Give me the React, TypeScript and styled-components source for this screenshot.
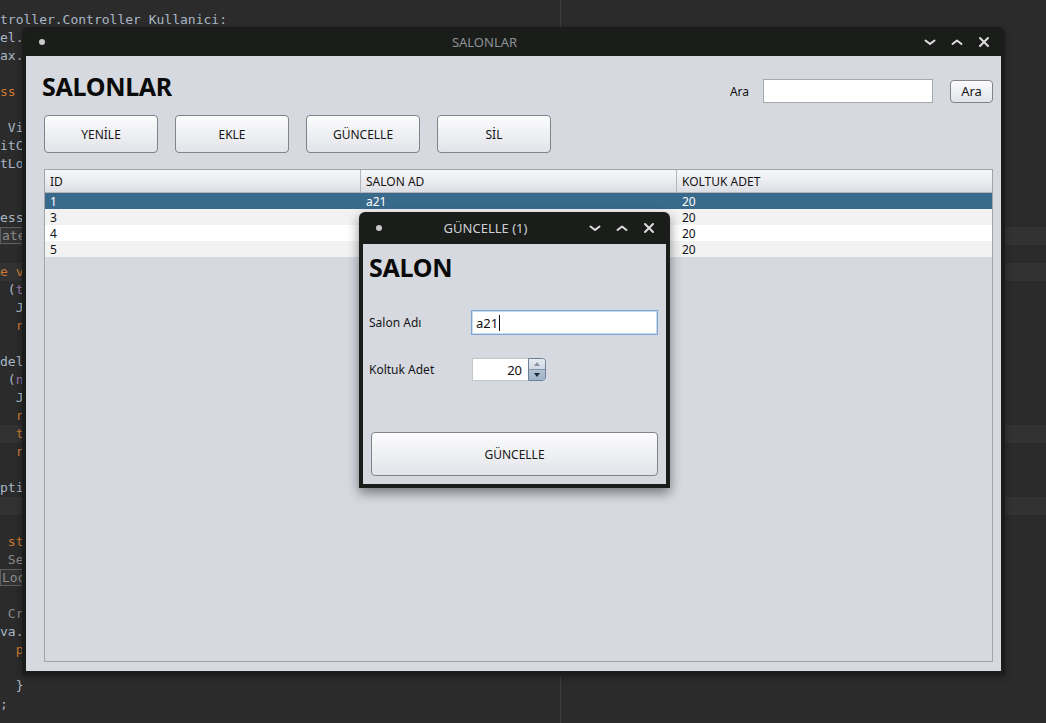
import React from "react";
import styled, { createGlobalStyle } from "styled-components";

const GlobalStyle = createGlobalStyle`
  html, body { margin: 0; padding: 0; background: #2b2b2b; }
  * { box-sizing: border-box; }
`;

const UI_FONT = `"Noto Sans", "Open Sans", "DejaVu Sans", sans-serif`;

const Desktop = styled.div`
  position: relative;
  width: 1046px;
  height: 723px;
  overflow: hidden;
  background: #2b2b2b;
  &::after {
    content: "";
    position: absolute;
    left: 560px;
    top: 0;
    bottom: 0;
    width: 1px;
    background: #3c3c3c;
  }
`;

const CodeArea = styled.div`
  display: flex;
  flex-direction: column;
  padding-top: 11px;
  font-family: "DejaVu Sans Mono", "Liberation Mono", monospace;
  font-size: 13px;
  line-height: 18px;
  color: #a9b7c6;
`;

const CodeLine = styled.div<{ $hl?: boolean }>`
  height: 18px;
  white-space: pre;
  background: ${(p) => (p.$hl ? "#323232" : "transparent")};
`;

const Kw = styled.span`
  color: #cc7832;
`;
const Var = styled.span`
  color: #9876aa;
`;
const Dim = styled.span`
  color: #8a8a8a;
`;
const Tag = styled.span`
  color: #8c8c8c;
  border: 1px solid #5e5e5e;
  background: #333333;
  padding: 0 1px;
`;

const Frame = styled.div<{ $x: number; $y: number; $w: number; $h: number; $shadow?: boolean }>`
  position: absolute;
  left: ${(p) => p.$x}px;
  top: ${(p) => p.$y}px;
  width: ${(p) => p.$w}px;
  height: ${(p) => p.$h}px;
  display: flex;
  flex-direction: column;
  background: #1b1d1b;
  border-radius: 6px 6px 0 0;
  box-shadow: ${(p) => (p.$shadow ? "0 5px 12px rgba(0,0,0,0.45)" : "0 2px 6px rgba(0,0,0,0.35)")};
  font-family: ${UI_FONT};
  z-index: 1;
`;

const TitleBar = styled.div<{ $h: number }>`
  height: ${(p) => p.$h}px;
  flex: none;
  display: flex;
  align-items: center;
  padding: 0 15px 0 17px;
`;

const TitleDot = styled.span`
  width: 6px;
  height: 6px;
  border-radius: 50%;
  background: #c9c9c9;
  flex: none;
`;

const TitleText = styled.div<{ $active?: boolean }>`
  flex: 1;
  text-align: center;
  font-size: 13px;
  color: ${(p) => (p.$active ? "#cdd1d4" : "#8d9194")};
`;

const Controls = styled.div`
  display: flex;
  align-items: center;
  gap: 15px;
`;

const Ctrl = styled.svg`
  width: 12px;
  height: 12px;
  display: block;
  stroke: #dedede;
  stroke-width: 2;
  fill: none;
  stroke-linecap: round;
  stroke-linejoin: round;
`;

const Body = styled.div`
  flex: 1;
  margin: 0 4px 4px 4px;
  background: #d6d9e0;
  display: flex;
  flex-direction: column;
  color: #111;
  font-size: 12px;
`;

const MainBody = styled(Body)`
  padding: 23px 8px 9px 18px;
`;

const HeaderRow = styled.div`
  height: 24px;
  display: flex;
  align-items: center;
`;

const Heading = styled.h1`
  margin: 0 0 10px -2px;
  font-size: 25px;
  line-height: 25px;
  font-weight: 700;
  color: #0a0a0a;
  letter-spacing: -0.3px;
`;

const DialogHeading = styled(Heading)`
  margin: 0;
`;

const SearchGroup = styled.div`
  margin-left: auto;
  display: flex;
  align-items: center;
`;

const SearchLabel = styled.span`
  font-size: 12px;
  margin-right: 14px;
`;

const TextBox = styled.div<{ $w: number }>`
  width: ${(p) => p.$w}px;
  height: 24px;
  background: #fff;
  border: 1px solid #a7a9ad;
`;

const Btn = styled.div<{ $w: number; $h: number }>`
  width: ${(p) => p.$w}px;
  height: ${(p) => p.$h}px;
  flex: none;
  display: flex;
  align-items: center;
  justify-content: center;
  border: 1px solid #808388;
  border-radius: 4px;
  background: linear-gradient(#fcfcfd 0%, #f0f1f4 45%, #e2e4e9 100%);
  box-shadow: inset 0 1px 0 #ffffff;
  font-size: 12px;
  color: #161616;
`;

const SmallBtn = styled(Btn)`
  margin-left: 17px;
  font-size: 13px;
`;

const ButtonRow = styled.div`
  margin-top: 12px;
  display: flex;
  gap: 17px;
`;

const Table = styled.div`
  margin-top: 16px;
  flex: 1;
  border: 1px solid #a1a4a9;
  display: flex;
  flex-direction: column;
`;

const TableHead = styled.div`
  height: 23px;
  display: grid;
  grid-template-columns: 316px 316px 1fr;
  border-bottom: 1px solid #b3b5ba;
  background: linear-gradient(#f6f7f9, #e9eaee 60%, #dcdee3);
`;

const HeadCell = styled.div`
  display: flex;
  align-items: center;
  padding-left: 5px;
  font-size: 12px;
  color: #141414;
  border-right: 1px solid #b4b6bb;
  &:last-child {
    border-right: none;
  }
`;

const Row = styled.div<{ $kind: "sel" | "odd" | "even" }>`
  height: 16px;
  display: grid;
  grid-template-columns: 316px 316px 1fr;
  background: ${(p) => (p.$kind === "sel" ? "#396a8b" : p.$kind === "odd" ? "#f2f2f2" : "#ffffff")};
  color: ${(p) => (p.$kind === "sel" ? "#ffffff" : "#111111")};
`;

const Cell = styled.div`
  padding-left: 5px;
  font-size: 12px;
  line-height: 17px;
  white-space: nowrap;
  overflow: hidden;
`;

const DialogBody = styled(Body)`
  padding: 11px 0 0 6px;
`;

const FormGrid = styled.div`
  margin-top: 30px;
  display: grid;
  grid-template-columns: 102px 187px;
  grid-template-rows: 25px 23px;
  row-gap: 23px;
  align-items: center;
`;

const FieldLabel = styled.span`
  font-size: 12px;
  color: #151515;
`;

const FocusField = styled.div`
  height: 25px;
  background: #fff;
  border: 1px solid #7ea5d2;
  box-shadow: inset 0 0 0 1px #c9dbef;
  display: flex;
  align-items: center;
  padding-left: 4px;
  font-size: 13px;
  color: #111;
`;

const Caret = styled.span`
  width: 1px;
  height: 16px;
  background: #111;
  margin-left: 1px;
`;

const Spinner = styled.div`
  width: 74px;
  height: 23px;
  margin-left: 1px;
  display: flex;
`;

const SpinField = styled.div`
  width: 56px;
  background: #fff;
  border: 1px solid #c4c6ca;
  border-right: none;
  display: flex;
  align-items: center;
  justify-content: flex-end;
  padding-right: 6px;
  font-size: 13px;
  color: #111;
`;

const SpinButtons = styled.div`
  width: 18px;
  display: flex;
  flex-direction: column;
  border: 1px solid #6f7f93;
  border-radius: 0 4px 4px 0;
  overflow: hidden;
`;

const SpinBtn = styled.div<{ $down?: boolean }>`
  flex: 1;
  display: flex;
  align-items: center;
  justify-content: center;
  background: ${(p) =>
    p.$down ? "linear-gradient(#b2c3d6, #9fb2c8)" : "linear-gradient(#e6ebf1, #cfd9e4)"};
  border-top: ${(p) => (p.$down ? "1px solid #8797aa" : "none")};
`;

const Tri = styled.span<{ $down?: boolean }>`
  width: 0;
  height: 0;
  border-left: 3px solid transparent;
  border-right: 3px solid transparent;
  ${(p) => (p.$down ? "border-top: 4px solid #1e2a38;" : "border-bottom: 4px solid #8a94a0;")}
`;

const WideButton = styled(Btn)`
  margin: 51px 0 0 2px;
  font-size: 12px;
`;

const ChevronDown = () => (
  <Ctrl viewBox="0 0 12 12">
    <path d="M1.5 4.5 L6 8 L10.5 4.5" />
  </Ctrl>
);
const ChevronUp = () => (
  <Ctrl viewBox="0 0 12 12">
    <path d="M1.5 8 L6 4.5 L10.5 8" />
  </Ctrl>
);
const CloseX = () => (
  <Ctrl viewBox="0 0 12 12">
    <path d="M2 2 L10 10 M10 2 L2 10" />
  </Ctrl>
);

const WindowControls = () => (
  <Controls>
    <ChevronDown />
    <ChevronUp />
    <CloseX />
  </Controls>
);

const codeLines: { hl?: boolean; node: React.ReactNode }[] = [
  { node: "troller.Controller Kullanici:" },
  { node: "el." },
  { node: "ax." },
  { node: "" },
  { node: <Kw>ss</Kw> },
  { node: "" },
  { node: " Vi" },
  { node: "itC" },
  { node: "tLo" },
  { node: "" },
  { node: "" },
  { node: "ess" },
  { hl: true, node: <Tag>ated</Tag> },
  { node: "" },
  { hl: true, node: <Kw>e v</Kw> },
  { node: <> (<Var>t</Var></> },
  { node: "  J" },
  { node: <>  <Kw>r</Kw></> },
  { node: "" },
  { node: "del" },
  { node: <> (<Var>n</Var></> },
  { node: "  J" },
  { node: <>  <Kw>r</Kw></> },
  { hl: true, node: <>  <Kw>t</Kw></> },
  { node: <>  <Kw>r</Kw></> },
  { node: "" },
  { node: "pti" },
  { hl: true, node: "" },
  { node: "" },
  { node: <> <Kw>st</Kw></> },
  { node: <> <Dim>Se</Dim></> },
  { node: <Tag>Look</Tag> },
  { node: "" },
  { node: <> <Dim>Cr</Dim></> },
  { node: "va." },
  { node: <>  <Kw>p</Kw></> },
  { node: "" },
  { node: "  }" },
  { node: ";" },
];

const rows = [
  { id: "1", name: "a21", seats: "20" },
  { id: "3", name: "b", seats: "20" },
  { id: "4", name: "", seats: "20" },
  { id: "5", name: "", seats: "20" },
];

export default function App() {
  return (
    <>
      <GlobalStyle />
      <Desktop>
        <CodeArea>
          {codeLines.map((l, i) => (
            <CodeLine key={i} $hl={l.hl}>
              {l.node}
            </CodeLine>
          ))}
        </CodeArea>

        <Frame $x={22} $y={27} $w={983} $h={648}>
          <TitleBar $h={29}>
            <TitleDot />
            <TitleText>SALONLAR</TitleText>
            <WindowControls />
          </TitleBar>
          <MainBody>
            <HeaderRow>
              <Heading>SALONLAR</Heading>
              <SearchGroup>
                <SearchLabel>Ara</SearchLabel>
                <TextBox $w={170} />
                <SmallBtn $w={43} $h={23}>
                  Ara
                </SmallBtn>
              </SearchGroup>
            </HeaderRow>
            <ButtonRow>
              <Btn $w={114} $h={38}>YENİLE</Btn>
              <Btn $w={114} $h={38}>EKLE</Btn>
              <Btn $w={114} $h={38}>GÜNCELLE</Btn>
              <Btn $w={114} $h={38}>SİL</Btn>
            </ButtonRow>
            <Table>
              <TableHead>
                <HeadCell>ID</HeadCell>
                <HeadCell>SALON AD</HeadCell>
                <HeadCell>KOLTUK ADET</HeadCell>
              </TableHead>
              {rows.map((r, i) => (
                <Row key={r.id} $kind={i === 0 ? "sel" : i % 2 === 1 ? "odd" : "even"}>
                  <Cell>{r.id}</Cell>
                  <Cell>{r.name}</Cell>
                  <Cell>{r.seats}</Cell>
                </Row>
              ))}
            </Table>
          </MainBody>
        </Frame>

        <Frame $x={359} $y={212} $w={311} $h={276} $shadow>
          <TitleBar $h={32}>
            <TitleDot />
            <TitleText $active>GÜNCELLE (1)</TitleText>
            <WindowControls />
          </TitleBar>
          <DialogBody>
            <DialogHeading>SALON</DialogHeading>
            <FormGrid>
              <FieldLabel>Salon Adı</FieldLabel>
              <FocusField>
                a21
                <Caret />
              </FocusField>
              <FieldLabel>Koltuk Adet</FieldLabel>
              <Spinner>
                <SpinField>20</SpinField>
                <SpinButtons>
                  <SpinBtn>
                    <Tri />
                  </SpinBtn>
                  <SpinBtn $down>
                    <Tri $down />
                  </SpinBtn>
                </SpinButtons>
              </Spinner>
            </FormGrid>
            <WideButton $w={287} $h={44}>
              GÜNCELLE
            </WideButton>
          </DialogBody>
        </Frame>
      </Desktop>
    </>
  );
}
